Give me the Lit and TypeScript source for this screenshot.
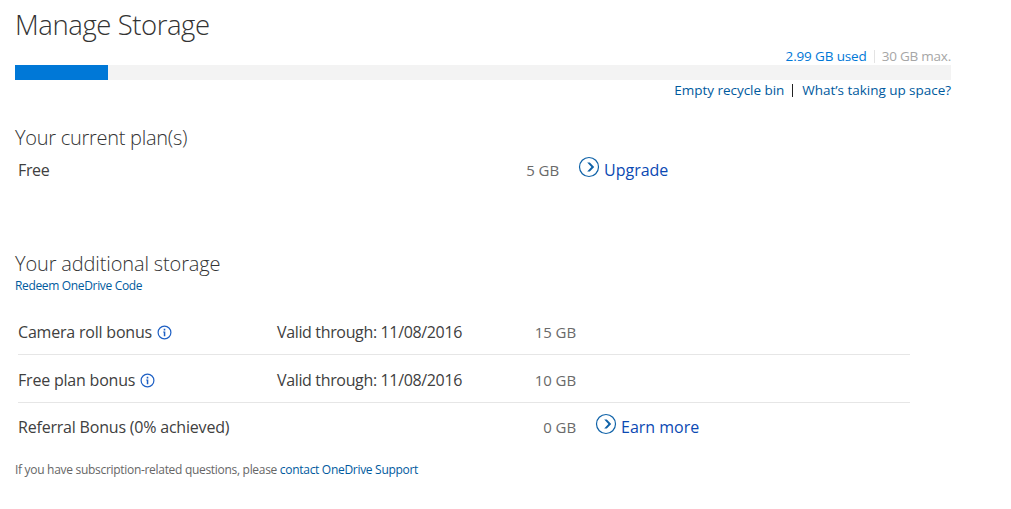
import { LitElement, html, css, svg } from "lit";
import { customElement, property } from "lit/decorators.js";

@customElement("arrow-link")
export class ArrowLink extends LitElement {
  @property() label = "";

  static styles = css`
    :host {
      display: flex;
      align-items: center;
      color: #0b49b3;
      white-space: nowrap;
      letter-spacing: 0;
    }
    svg {
      flex: none;
      width: 22px;
      height: 22px;
      margin: 0 4px 6px 0;
    }
  `;

  render() {
    return html`
      <svg viewBox="0 0 22 22" fill="none" stroke="#0f62a8">
        <circle cx="11" cy="11" r="9.5" stroke-width="1.2"></circle>
        <path d="M9.2 6.6h2.6L16.2 11l-4.4 4.4H9.2L13.4 11z" fill="#0f62a8" stroke="none"></path>
      </svg>
      <span>${this.label}</span>
    `;
  }
}

interface Bonus {
  name: string;
  info: boolean;
  valid: string;
  size: string;
  action?: string;
}

const bonuses: Bonus[] = [
  { name: "Camera roll bonus", info: true, valid: "Valid through: 11/08/2016", size: "15 GB" },
  { name: "Free plan bonus", info: true, valid: "Valid through: 11/08/2016", size: "10 GB" },
  { name: "Referral Bonus (0% achieved)", info: false, valid: "", size: "0 GB", action: "Earn more" },
];

const usedShare = 9.94;

const infoIcon = html`
  <svg class="info" viewBox="0 0 15 15">
    ${svg`
      <circle cx="7.5" cy="7.5" r="6.4" fill="none" stroke="#1d5fc4" stroke-width="1.2"></circle>
      <path d="M6.7 3.8h1.6v1.6H6.7zM6.2 6.4h2.1v4.8H6.8V7.4h-.6z" fill="#1d5fc4"></path>
    `}
  </svg>
`;

@customElement("app-root")
export class AppRoot extends LitElement {
  static styles = css`
    :host {
      display: block;
      box-sizing: border-box;
      height: 509px;
      padding-left: 15px;
      overflow: hidden;
      background: #fff;
      color: #333;
      font-family: "Open Sans", "Noto Sans", sans-serif;
      font-size: 16px;
      white-space: nowrap;
    }
    h1,
    h2 {
      margin: 0;
      font-weight: 300;
    }
    h1 {
      height: 47px;
      line-height: 50px;
      font-size: 27.5px;
      letter-spacing: -0.43px;
    }
    h2 {
      font-size: 20px;
      line-height: 32px;
      height: 30px;
      letter-spacing: -0.14px;
      color: #333;
    }
    a {
      color: #005a9e;
      text-decoration: none;
    }
    .usage,
    .links {
      display: flex;
      justify-content: flex-end;
      align-items: center;
      width: 936px;
      font-size: 13.5px;
    }
    .usage {
      height: 18px;
      color: #a6a6a6;
      letter-spacing: -0.23px;
    }
    .used {
      color: #0078d7;
      letter-spacing: -0.14px;
    }
    .divider {
      width: 1px;
      height: 13px;
      margin: 0 7px 0 7px;
      background: #e3e3e3;
    }
    .bar {
      width: 936px;
      height: 15px;
      background: #f3f3f3;
    }
    .fill {
      height: 100%;
      background: #0078d7;
    }
    .links {
      height: 20px;
      letter-spacing: -0.03px;
    }
    .links .divider {
      margin: 0 9px 0 8px;
      background: #222;
    }
    .plans {
      margin-top: 22px;
    }
    .plans .current {
      letter-spacing: -0.27px;
    }
    .plan,
    .bonus {
      display: grid;
      align-items: center;
      box-sizing: border-box;
      margin-left: 3px;
      width: 892px;
    }
    .plan {
      grid-template-columns: 300px 241px 19px 1fr;
      height: 36px;
    }
    .bonus {
      grid-template-columns: 259px 299px 19px 1fr;
      height: 48px;
      border-bottom: 1px solid #e6e6e6;
    }
    .bonus:first-child {
      height: 45px;
    }
    .bonus:nth-child(2) {
      padding-top: 3px;
    }
    .bonus:last-child {
      border-bottom: none;
    }
    .name {
      display: flex;
      align-items: center;
      letter-spacing: -0.2px;
      color: #404040;
    }
    .free {
      letter-spacing: -0.35px;
    }
    .info {
      width: 15px;
      height: 15px;
      margin-left: 5px;
    }
    .valid-size {
      display: flex;
      justify-content: space-between;
      align-items: center;
    }
    .valid {
      letter-spacing: -0.35px;
      color: #404040;
    }
    .size {
      font-size: 15px;
      color: #6a6a6a;
      letter-spacing: -0.1px;
      text-align: right;
    }
    .extra {
      margin-top: 60px;
    }
    .redeem {
      display: block;
      height: 15px;
      line-height: 16px;
      font-size: 12px;
      letter-spacing: -0.34px;
    }
    .bonuses {
      margin-top: 17px;
    }
    .footer {
      margin-top: 9px;
      line-height: 20px;
      font-size: 12px;
      letter-spacing: -0.3px;
      color: #666;
    }
  `;

  render() {
    return html`
      <h1>Manage Storage</h1>
      <div class="usage">
        <span class="used">2.99 GB used</span><span class="divider"></span><span>30 GB max.</span>
      </div>
      <div class="bar"><div class="fill" style="width:${usedShare}%"></div></div>
      <div class="links">
        <a>Empty recycle bin</a><span class="divider"></span><a>What’s taking up space?</a>
      </div>

      <section class="plans">
        <h2 class="current">Your current plan(s)</h2>
        <div class="plan">
          <span class="name free">Free</span>
          <span class="size">5 GB</span>
          <span></span>
          <arrow-link label="Upgrade"></arrow-link>
        </div>
      </section>

      <section class="extra">
        <h2>Your additional storage</h2>
        <a class="redeem">Redeem OneDrive Code</a>
        <div class="bonuses">
          ${bonuses.map(
            (b) => html`
              <div class="bonus">
                <span class="name">${b.name}${b.info ? infoIcon : ""}</span>
                <span class="valid-size">
                  <span class="valid">${b.valid}</span>
                  <span class="size">${b.size}</span>
                </span>
                <span></span>
                ${b.action ? html`<arrow-link label=${b.action}></arrow-link>` : ""}
              </div>
            `,
          )}
        </div>
      </section>

      <div class="footer">
        If you have subscription-related questions, please <a>contact OneDrive Support</a>
      </div>
    `;
  }
}
